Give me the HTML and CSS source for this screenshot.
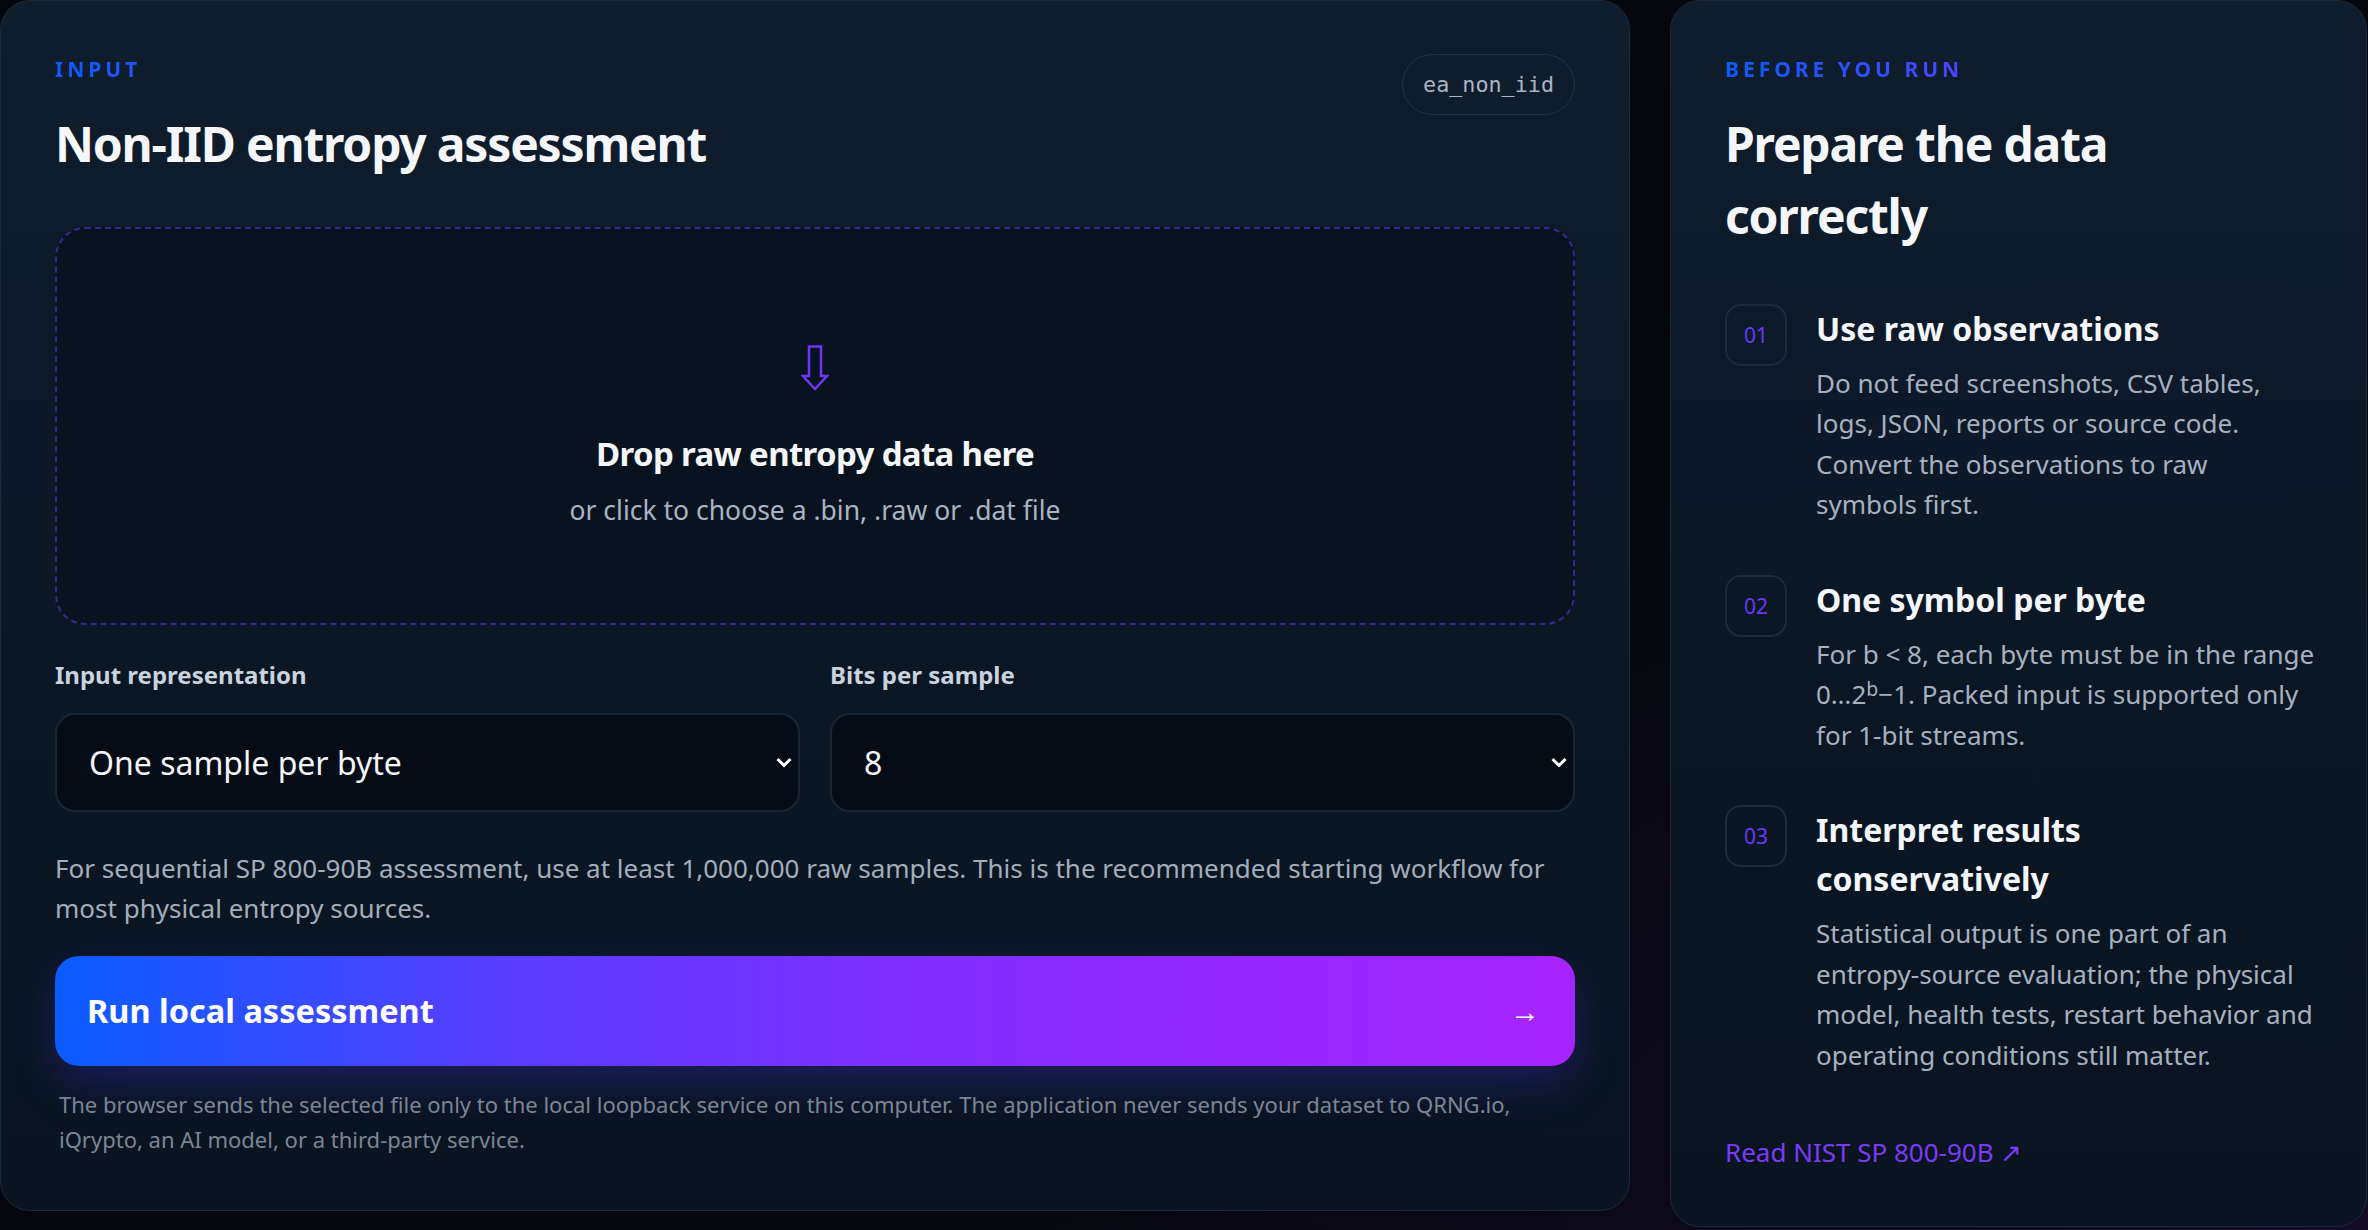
FILE: index.html
```html
<!DOCTYPE html>
<html lang="en">
<head>
    <meta charset="UTF-8">
    <meta name="viewport" content="width=device-width, initial-scale=1.0">
    <title>Non-IID entropy assessment</title>
    <link rel="stylesheet" href="styles.css">
</head>
<body>
    <main class="layout">
        <section class="card card-input">
            <header class="card-head">
                <div>
                    <p class="eyebrow">Input</p>
                    <h1 class="card-title">Non-IID entropy assessment</h1>
                </div>
                <span class="badge">ea_non_iid</span>
            </header>

            <label class="dropzone" for="dataFile">
                <input type="file" id="dataFile" accept=".bin,.raw,.dat" hidden>
                <svg class="drop-icon" width="28" height="46" viewBox="0 0 28 46">
                    <path d="M8 1.5H20V31H26L14 44L2 31H8Z" fill="none" stroke="#6f35f5" stroke-width="2.5" stroke-linejoin="miter"/>
                </svg>
                <strong class="drop-title">Drop raw entropy data here</strong>
                <span class="drop-sub">or click to choose a .bin, .raw or .dat file</span>
            </label>

            <div class="fields">
                <div class="field">
                    <label for="representation">Input representation</label>
                    <div class="select-wrap">
                        <select id="representation">
                            <option>One sample per byte</option>
                            <option>Packed bits (1-bit only)</option>
                        </select>
                        <svg class="chevron" width="18" height="11" viewBox="0 0 18 11">
                            <path d="M2.5 2L9 8.5L15.5 2" fill="none" stroke="#fff" stroke-width="3"/>
                        </svg>
                    </div>
                </div>
                <div class="field">
                    <label for="bits">Bits per sample</label>
                    <div class="select-wrap">
                        <select id="bits">
                            <option>8</option>
                            <option>7</option>
                            <option>6</option>
                            <option>5</option>
                            <option>4</option>
                            <option>3</option>
                            <option>2</option>
                            <option>1</option>
                        </select>
                        <svg class="chevron" width="18" height="11" viewBox="0 0 18 11">
                            <path d="M2.5 2L9 8.5L15.5 2" fill="none" stroke="#fff" stroke-width="3"/>
                        </svg>
                    </div>
                </div>
            </div>

            <p class="hint">For sequential SP 800-90B assessment, use at least 1,000,000 raw samples. This is the recommended starting workflow for most physical entropy sources.</p>

            <button type="button" class="run-btn">
                <span>Run local assessment</span>
                <span class="run-arrow">→</span>
            </button>

            <p class="privacy">The browser sends the selected file only to the local loopback service on this computer. The application never sends your dataset to QRNG.io, iQrypto, an AI model, or a third-party service.</p>
        </section>

        <aside class="card card-guide">
            <p class="eyebrow">Before you run</p>
            <h2 class="card-title guide-title">Prepare the data correctly</h2>

            <ol class="steps">
                <li class="step">
                    <span class="step-num">01</span>
                    <div class="step-body">
                        <h3 class="step-title">Use raw observations</h3>
                        <p class="step-desc">Do not feed screenshots, CSV tables, logs, JSON, reports or source code. Convert the observations to raw symbols first.</p>
                    </div>
                </li>
                <li class="step">
                    <span class="step-num">02</span>
                    <div class="step-body">
                        <h3 class="step-title">One symbol per byte</h3>
                        <p class="step-desc">For b &lt; 8, each byte must be in the range 0…2<sup>b</sup>−1. Packed input is supported only for 1-bit streams.</p>
                    </div>
                </li>
                <li class="step">
                    <span class="step-num">03</span>
                    <div class="step-body">
                        <h3 class="step-title">Interpret results conservatively</h3>
                        <p class="step-desc">Statistical output is one part of an entropy-source evaluation; the physical model, health tests, restart behavior and operating conditions still matter.</p>
                    </div>
                </li>
            </ol>

            <a class="doc-link" href="#">Read NIST SP 800-90B ↗</a>
        </aside>
    </main>
</body>
</html>
```

FILE: styles.css
```css
* {
    margin: 0;
    padding: 0;
    box-sizing: border-box;
}

body {
    background: radial-gradient(ellipse at 100% 100%, #140b24 0%, #05070d 45%) #05070d;
    font-family: 'Noto Sans', 'Open Sans', sans-serif;
    color: #f2f5f9;
    min-height: 100vh;
}

.layout {
    display: flex;
    align-items: flex-start;
    gap: 40px;
}

.card {
    background: linear-gradient(180deg, #0f1d2d 0%, #0b1624 60%, #0a1420 100%);
    border: 1px solid #1d2939;
    border-radius: 30px;
    padding: 53px 54px;
}

.card-input {
    width: 1630px;
}

.card-guide {
    width: 697px;
    padding-right: 51.5px;
}

/* section eyebrow with blue to violet text */
.eyebrow {
    font-size: 21px;
    line-height: 31.5px;
    font-weight: 700;
    letter-spacing: 0.19em;
    text-transform: uppercase;
    background: linear-gradient(90deg, #0b5cff, #a424ff);
    -webkit-background-clip: text;
    background-clip: text;
    color: transparent;
    margin-bottom: 22px;
}

.card-title {
    font-size: 48px;
    line-height: 72px;
    font-weight: 700;
    letter-spacing: -0.025em;
    color: #f4f6fa;
}

.card-head {
    display: flex;
    justify-content: space-between;
    align-items: flex-start;
}

.badge {
    font-family: 'DejaVu Sans Mono', 'Liberation Mono', monospace;
    font-size: 21.75px;
    line-height: 31px;
    padding: 14px 20px;
    border: 1px solid #253246;
    border-radius: 999px;
    color: #a9b5c5;
}

/* file drop area */
.dropzone {
    display: flex;
    flex-direction: column;
    align-items: center;
    margin-top: 47px;
    height: 398px;
    padding-top: 116px;
    border: 2px dashed rgba(92, 54, 230, 0.55);
    border-radius: 30px;
    background: #09131f;
    cursor: pointer;
}

.drop-icon {
    display: block;
}

.drop-title {
    margin-top: 40px;
    font-size: 33px;
    line-height: 46px;
    font-weight: 700;
    letter-spacing: -0.02em;
    color: #f4f6fa;
}

.drop-sub {
    margin-top: 13px;
    font-size: 26.5px;
    line-height: 40px;
    color: #a9b4c3;
}

.fields {
    display: grid;
    grid-template-columns: 1fr 1fr;
    gap: 30px;
    margin-top: 33px;
}

.field label {
    display: block;
    font-size: 24px;
    line-height: 33px;
    font-weight: 700;
    color: #c9d3de;
    margin-bottom: 22px;
}

.select-wrap {
    position: relative;
}

.select-wrap select {
    display: block;
    width: 100%;
    height: 99px;
    appearance: none;
    -webkit-appearance: none;
    background: #060c16;
    border: 2px solid #1a2534;
    border-radius: 20px;
    color: #f3f5f8;
    font-family: inherit;
    font-size: 32px;
    padding: 0 60px 0 32px;
    outline: none;
}

.chevron {
    position: absolute;
    right: 7px;
    top: 44px;
    pointer-events: none;
}

.hint {
    margin-top: 36px;
    font-size: 26px;
    line-height: 40px;
    color: #a3aebd;
}

.run-btn {
    display: flex;
    justify-content: space-between;
    align-items: center;
    width: 100%;
    height: 110px;
    margin-top: 28px;
    padding: 0 35px 0 32px;
    border: none;
    border-radius: 24px;
    background: linear-gradient(90deg, #0a5cff 0%, #5a3dff 30%, #842cff 60%, #a724ff 100%);
    box-shadow: 0 18px 44px rgba(70, 50, 230, 0.28);
    color: #fff;
    font-family: inherit;
    font-size: 32.5px;
    font-weight: 700;
    cursor: pointer;
}

.run-arrow {
    font-size: 30px;
    font-weight: 400;
}

.privacy {
    margin-top: 21px;
    padding: 0 4px;
    font-size: 22px;
    line-height: 35px;
    color: #7b8695;
}

/* guide card */
.guide-title {
    max-width: 560px;
}

.steps {
    list-style: none;
    margin-top: 52px;
}

.step {
    display: flex;
    align-items: flex-start;
    gap: 29px;
}

.step + .step {
    margin-top: 50px;
}

.step-num {
    flex: none;
    display: grid;
    place-items: center;
    width: 62px;
    height: 62px;
    border: 2px solid #1e2a3a;
    border-radius: 16px;
    color: #6b37f2;
    font-size: 21px;
}

.step-body {
    flex: 1;
}

.step-title {
    font-size: 32px;
    line-height: 49px;
    font-weight: 700;
    color: #f3f6fa;
}

.step-desc {
    margin-top: 10px;
    font-size: 26px;
    line-height: 40.5px;
    color: #a6b1c0;
}

.step-desc sup {
    font-size: 0.75em;
    line-height: 1;
    vertical-align: 0.4em;
}

.doc-link {
    display: inline-block;
    margin-top: 57px;
    font-size: 26px;
    line-height: 41px;
    color: #7b3bf6;
    text-decoration: none;
}
```
